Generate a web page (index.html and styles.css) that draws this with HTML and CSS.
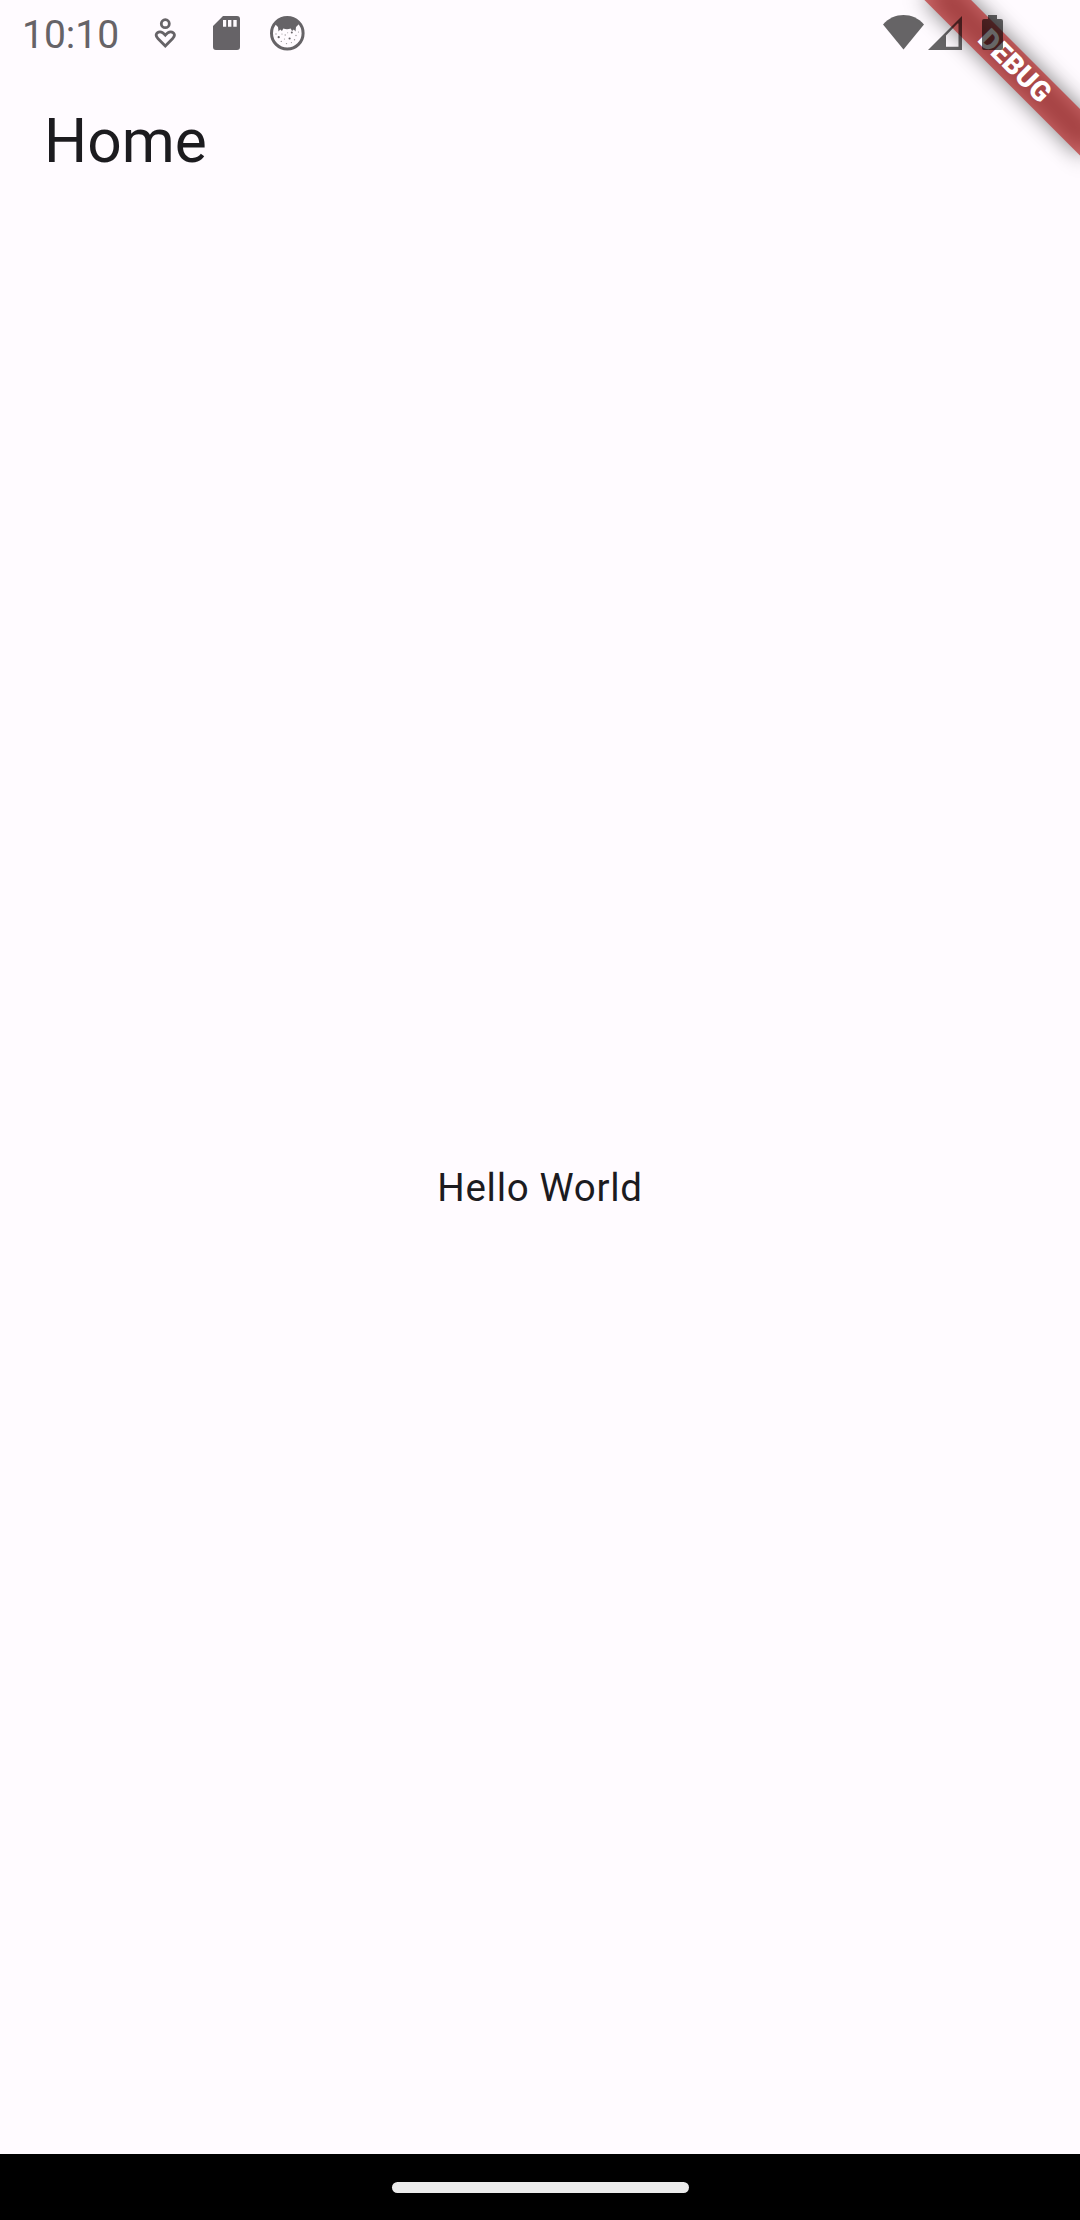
FILE: index.html
```html
<!DOCTYPE html>
<html lang="en">
<head>
<meta charset="utf-8">
<title>Home</title>
<link rel="stylesheet" href="styles.css">
</head>
<body>
<div class="screen">
  <div class="banner"><div class="ribbon"><span class="ribbon-text">DEBUG</span></div></div>
  <div class="status-bar">
    <span class="clock">10:10</span>
    <div class="notifications">
      <svg class="person" width="22" height="31" viewBox="0 0 22 31" fill="none" stroke="#666367" stroke-width="2.8">
        <circle cx="11.3" cy="5.7" r="4"/>
        <path d="M11.3 28L3.9 20.4C.8 17.5 2.2 14 5.9 13.8C8.3 13.7 9.8 15.2 11.3 17.1C12.8 15.2 14.3 13.7 16.7 13.8C20.4 14 21.8 17.5 18.7 20.4Z"/>
      </svg>
      <svg class="sd" width="27" height="34" viewBox="0 0 27 34">
        <path fill="#666367" fill-rule="evenodd" d="M10 0H24Q27 0 27 3V31Q27 34 24 34H3Q0 34 0 31V10ZM10 4V10.7H13.2V4ZM15 4V10.7H18.4V4ZM20.3 4V10.7H23.7V4Z"/>
      </svg>
      <svg class="cat" width="36" height="36" viewBox="0 0 36 36">
        <circle cx="18.3" cy="18.2" r="15.8" fill="none" stroke="#666367" stroke-width="3"/>
        <path fill="#666367" d="M6 9C11 0 25 0 30 9L27 12L26.5 16.5L24.8 14.5L23 16L21.7 13.5Q18 14.8 14.3 13.5L13 16L11.2 14.5L9.5 16.5L9 12Z"/>
        <g fill="#666367"><circle cx="9.7" cy="22.2" r="1.1"/><circle cx="22.8" cy="17.5" r="1"/><circle cx="20.6" cy="23.5" r="1.1"/></g>
        <g fill="#999699"><circle cx="7" cy="19" r=".7"/><circle cx="13" cy="19" r=".6"/><circle cx="16.2" cy="20" r=".7"/><circle cx="15.5" cy="24" r=".6"/><circle cx="12.3" cy="26.4" r=".7"/><circle cx="17.5" cy="28.6" r=".7"/><circle cx="22.4" cy="27.6" r=".6"/><circle cx="25.5" cy="24.7" r=".7"/><circle cx="27" cy="20.5" r=".7"/><circle cx="29.5" cy="17" r=".6"/><circle cx="18.7" cy="17.7" r=".5"/></g>
      </svg>
    </div>
    <div class="system">
      <svg class="wifi" width="41" height="35" viewBox="0 0 41 35"><path d="M0 9.5C11-3.1 30-3.1 41 9.5L20.5 34.5Z"/></svg>
      <svg class="signal" width="34" height="34" viewBox="0 0 34 34"><path fill-rule="evenodd" d="M0 34L34 0V34ZM18 19.5V30.7H30.5V7.5H29.5Z"/></svg>
      <svg class="battery" width="21" height="35" viewBox="0 0 21 35"><path d="M6 0H15V4H19Q21 4 21 6V33Q21 35 19 35H2Q0 35 0 33V6Q0 4 2 4H6Z"/></svg>
    </div>
  </div>
  <header class="app-bar"><h1 class="title">Home</h1></header>
  <main class="body"><p class="message">Hello World</p></main>
  <nav class="nav-bar"><div class="handle"></div></nav>
</div>
</body>
</html>
```
FILE: styles.css
```css
body {
  margin: 0;
  font-family: Roboto, sans-serif;
  color: #1c1b1f;
}
.screen {
  position: relative;
  display: flex;
  flex-direction: column;
  width: 1080px;
  height: 2220px;
  overflow: hidden;
  background: #fffbff;
}
.status-bar {
  position: relative;
  z-index: 2;
  display: flex;
  align-items: flex-start;
  height: 66px;
  box-sizing: border-box;
  padding: 15px 77px 0 22px;
}
.clock {
  width: 132px;
  margin-top: -3px;
  font-size: 39px;
  line-height: 46px;
  color: #666367;
}
svg {
  display: block;
}
.notifications, .system {
  display: flex;
  align-items: flex-start;
}
.person { margin-top: 3px; }
.sd { margin: 1px 0 0 37px; }
.cat { margin-left: 29px; }
.system {
  margin-left: auto;
  fill: rgba(0, 0, 0, 0.6);
}
.signal { margin: 1px 20px 0 4px; }
.app-bar {
  display: flex;
  align-items: center;
  height: 154px;
  padding: 0 44px;
}
.title {
  margin: 0 0 4px;
  font-size: 60.5px;
  font-weight: 400;
  line-height: 77px;
}
.body {
  flex: 1;
  display: flex;
  align-items: center;
  justify-content: center;
}
.message {
  margin: 0;
  font-size: 38.5px;
  line-height: 55px;
  letter-spacing: 0.6875px;
}
.nav-bar {
  display: flex;
  align-items: center;
  justify-content: center;
  height: 66px;
  background: #000;
}
.handle {
  width: 297px;
  height: 11px;
  border-radius: 6px;
  background: #ebebeb;
}
/* Rotated about the top right corner of the screen */
.banner {
  position: absolute;
  z-index: 1;
  left: 1080px;
  top: 0;
  width: 0;
  height: 0;
  transform: rotate(45deg);
}
.ribbon {
  position: absolute;
  left: -110px;
  top: 77px;
  width: 220px;
  height: 33px;
  display: flex;
  align-items: center;
  justify-content: center;
}
.ribbon::before, .ribbon::after {
  content: "";
  position: absolute;
  inset: 0;
  background: rgba(0, 0, 0, 0.5);
  filter: blur(10.9px);
}
.ribbon::after {
  background: rgba(183, 28, 28, 0.63);
  filter: none;
}
.ribbon-text {
  position: relative;
  z-index: 1;
  margin: 0 0 2px 1px;
  font-size: 28px;
  font-weight: 900;
  line-height: 28px;
  color: #fff;
}
```
